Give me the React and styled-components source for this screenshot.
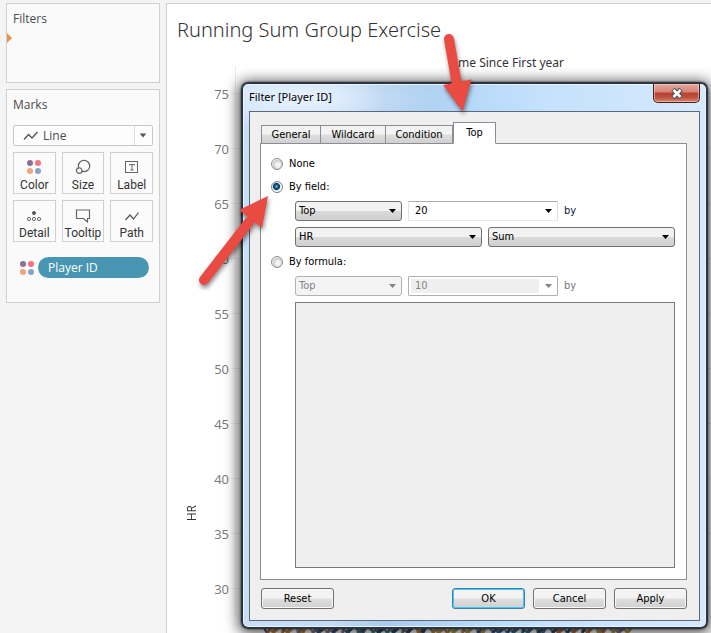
import React from "react";
import styled, { createGlobalStyle, css } from "styled-components";

const Global = createGlobalStyle`
  * { box-sizing: border-box; }
  html, body, #root { height: 100%; }
  body { margin: 0; background: #f4f4f4; overflow: hidden; }
  button, input, select { font: inherit; color: inherit; margin: 0; }
`;

const Page = styled.div`
  position: relative;
  display: flex;
  align-items: stretch;
  gap: 6px;
  min-height: 100%;
  padding: 3px 0 0 6px;
  font-family: "Open Sans", "Noto Sans", sans-serif;
  font-size: 12px;
  line-height: 16px;
  color: #4a4a4a;
`;

const Sidebar = styled.aside`
  display: flex;
  flex-direction: column;
  gap: 6px;
  flex: 0 0 154px;
`;

const Card = styled.section`
  display: flex;
  flex-direction: column;
  padding: 7px 6px;
  min-height: 80px;
  border: 1px solid #d0d0d0;
  background: #fafafa;
`;

const CardTitle = styled.h2`
  margin: 0;
  font-size: 12px;
  line-height: 16px;
  font-weight: 400;
`;

const DropMarker = styled.svg`
  display: block;
  width: 5px;
  height: 10px;
  margin: 6px 0 0 -6px;
`;

const MarkType = styled.button`
  display: flex;
  align-items: center;
  gap: 4px;
  height: 21px;
  margin-top: 12px;
  padding: 0 0 0 9px;
  border: 1px solid #c8c8c8;
  border-radius: 2px;
  background: #fdfdfd;
  text-align: left;
  span { flex: 1; }
`;

const MarkArrow = styled.svg`
  width: 18px;
  height: 19px;
  border-left: 1px solid #ddd;
`;

const MarkGrid = styled.div`
  display: grid;
  grid-template-columns: repeat(3, 1fr);
  gap: 6px;
  margin-top: 6px;
`;

const MarkButton = styled.button`
  display: flex;
  flex-direction: column;
  align-items: center;
  justify-content: flex-end;
  gap: 2px;
  height: 42px;
  padding: 0;
  border: 1px solid #d0d0d0;
  background: #fbfbfb;
  font-family: Roboto, "Open Sans", sans-serif;
  color: #333;
  white-space: nowrap;
`;

const PillRow = styled.div`
  display: flex;
  align-items: center;
  gap: 3px;
  margin: 15px 4px 0 6px;
`;

const Pill = styled.button`
  flex: 1;
  height: 21px;
  padding: 0 10px;
  border: 0;
  border-radius: 11px;
  background: #4996b2;
  font-weight: 500;
  && { color: #fff; }
  text-align: left;
`;

const MarksCard = styled(Card)`
  min-height: 214px;
`;

const Sheet = styled.main`
  flex: 1;
  min-width: 0;
  display: flex;
  flex-direction: column;
  border: solid #d0d0d0;
  border-width: 1px 0 0 1px;
  background: #fff;
`;

const SheetTitle = styled.h1`
  margin: 11px 0 0 10px;
  font-family: "Noto Sans", "Open Sans", sans-serif;
  font-weight: 300;
  font-size: 20px;
  line-height: 30px;
  color: #333;
`;

const ColumnHeader = styled.div`
  margin-top: 10px;
  padding-right: 147px;
  text-align: right;
  font-family: "Noto Sans", "Open Sans", sans-serif;
  font-size: 12px;
  line-height: 16px;
  color: #333;
`;

const Plot = styled.div`
  flex: 1;
  min-height: 0;
  display: flex;
  margin-top: -5px;
`;

const AxisCell = styled.div`
  flex: 0 0 34px;
  display: flex;
  flex-direction: column;
  justify-content: flex-end;
  align-items: center;
  padding: 0 0 104px 16px;
  line-height: 18px;
  color: #333;
  span { writing-mode: vertical-rl; transform: rotate(180deg); }
`;

const Ticks = styled.ol`
  flex: 1;
  margin: 0;
  padding: 0;
  list-style: none;
`;

const Tick = styled.li`
  display: flex;
  align-items: center;
  height: 55px;
  gap: 2px;
  font-size: 13px;
  color: #777;
  span { width: 28px; text-align: right; }
  &::after {
    content: "";
    flex: 1;
    height: 55px;
    background:
      linear-gradient(#ececec, #ececec) 0 50% / 100% 1px no-repeat,
      linear-gradient(#ececec, #ececec) 4px 0 / 1px 100% no-repeat;
  }
`;

const MarksStrip = styled.svg`
  display: block;
  height: 8px;
  width: 380px;
  margin-left: 95px;
`;

const Dialog = styled.div`
  position: absolute;
  top: 82px;
  left: 241px;
  right: 3px;
  bottom: 4px;
  display: flex;
  flex-direction: column;
  padding: 0 6px 6px;
  border: 2px solid #2b343f;
  border-radius: 7px;
  background:
    radial-gradient(ellipse 130px 34px at 60px 14px, #e9f3fe, transparent),
    linear-gradient(90deg, #c9dff6 0, #c3dbf5 90px, #a9cbec 140px, #badcfb 250px, #c5e1fc 65%, #d6e9fd 100%);
  box-shadow: 0 0 2px #222, 0 2px 14px 3px rgba(0, 0, 0, 0.65), inset 0 0 0 1px #e5f3ff;
  font-family: "DejaVu Sans Condensed", "DejaVu Sans", sans-serif;
  font-stretch: condensed;
  font-size: 11px;
  line-height: 14px;
  color: #000;
`;

const TitleBar = styled.header`
  display: flex;
  justify-content: space-between;
  height: 27px;
  h2 {
    margin: 5px 0 0;
    font-family: "Noto Sans", "Open Sans", sans-serif;
    font-stretch: normal;
    font-size: 11px;
    line-height: 16px;
    font-weight: 400;
  }
`;

const CloseButton = styled.button`
  display: flex;
  align-items: center;
  justify-content: center;
  width: 47px;
  height: 19px;
  padding: 0;
  border: 1px solid #43211e;
  border-top: 0;
  border-radius: 0 0 5px 5px;
  background: linear-gradient(#e6a79d 0, #d58376 45%, #b8402d 50%, #bf5240 75%, #d98774 100%);
  box-shadow: inset 0 0 0 1px rgba(255, 220, 210, 0.5);
`;

const Client = styled.div`
  flex: 1;
  min-height: 0;
  display: flex;
  flex-direction: column;
  padding: 11px 12px 11px 10px;
  border: 1px solid #5a6a7c;
  background: #efefef;
`;

const TabList = styled.div`
  display: flex;
  align-items: flex-end;
  height: 21px;
  padding-left: 1px;
  margin-bottom: -1px;
`;

const Tab = styled.button`
  flex: 0 0 ${(p) => p.$width}px;
  height: ${(p) => (p.$active ? 22 : 19)}px;
  padding: 0;
  border: 1px solid #8b8c95;
  border-left-width: ${(p) => (p.$joined ? 0 : 1)}px;
  border-bottom-color: ${(p) => (p.$active ? "#fff" : "#8b8c95")};
  background: ${(p) => (p.$active ? "#fff" : "linear-gradient(#f3f3f3 0 48%, #dedede 52%, #d0d0d0)")};
  position: relative;
`;

const Panel = styled.section`
  flex: 1;
  min-height: 0;
  display: flex;
  flex-direction: column;
  padding: 13px 11px 11px 10px;
  border: 1px solid #8b8c95;
  background: #fff;
`;

const RadioLabel = styled.label`
  display: flex;
  align-items: center;
  gap: 6px;
  height: 14px;
  margin-top: ${(p) => p.$top || 0}px;
`;

const Radio = styled.input`
  appearance: none;
  width: 12px;
  height: 12px;
  border: 1px solid #8e8f8f;
  border-radius: 50%;
  background: radial-gradient(circle at 60% 60%, #f4f4f4 20%, #c4c8cc 62%, #f4f4f4 66%);
  &:checked {
    border-color: #6b8496;
    background: radial-gradient(circle at 45% 45%, #69c6e8 0, #17587f 24%, #0d3352 40%, #dfe8ee 50%, #fff 66%);
  }
`;

const FieldRow = styled.div`
  display: flex;
  align-items: center;
  gap: 6px;
  margin: ${(p) => p.$top}px 0 0 24px;
`;

const SelectBox = styled.span`
  display: grid;
  align-items: center;
  flex: ${(p) => (p.$width ? `0 0 ${p.$width}px` : "1")};
  height: 20px;
  border: 1px solid ${(p) => (p.$disabled ? "#adb2b5" : "#707070")};
  border-radius: 3px;
  background: ${(p) => (p.$disabled ? "#f4f4f4" : "linear-gradient(#f2f2f2 0 48%, #dadada 52%, #cfcfcf)")};
  color: ${(p) => (p.$disabled ? "#838383" : "#000")};
  > * { grid-area: 1 / 1; }
`;

const Select = styled.select`
  appearance: none;
  width: 100%;
  height: 18px;
  padding: 0 16px 0 3px;
  border: 0;
  background: transparent;
  &:disabled { color: inherit; opacity: 1; }
`;

const Caret = styled.svg`
  justify-self: end;
  margin-right: 5px;
  width: 7px;
  height: 4px;
  pointer-events: none;
  fill: currentColor;
`;

const ComboBox = styled(SelectBox)`
  border-color: ${(p) => (p.$disabled ? "#adb2b5" : "#abadb3 #dbdfe6 #e3e9ef #e2e3ea")};
  border-radius: 1px;
  background: #fff;
`;

const ComboInput = styled.input`
  width: 100%;
  height: 14px;
  padding: 0 4px;
  border: solid transparent;
  border-width: 0 18px 0 2px;
  background: #fff;
  background-clip: padding-box;
  ${(p) => p.disabled && css`background-color: #efefef; color: inherit;`}
`;

const By = styled.span`
  color: ${(p) => (p.$disabled ? "#777" : "#0b1a3a")};
`;

const FormulaBox = styled.textarea`
  flex: 1;
  min-height: 0;
  margin: 6px 0 0 24px;
  border: 1px solid #7a7a7a;
  background: #efefef;
  resize: none;
`;

const Buttons = styled.footer`
  display: flex;
  gap: 8px;
  margin-top: 8px;
  padding-left: 1px;
`;

const Button = styled.button`
  width: 73px;
  height: 21px;
  padding: 0;
  border: 1px solid ${(p) => (p.$primary ? "#3c7fb1" : "#707070")};
  border-radius: 3px;
  background: linear-gradient(#f3f3f3 0 48%, #dedede 52%, #d0d0d0);
  box-shadow: inset 0 0 0 1px ${(p) => (p.$primary ? "#48c8f0" : "#f7f7f7")};
  margin-right: ${(p) => (p.$first ? "auto" : "0")};
`;

const Arrows = styled.svg`
  position: absolute;
  top: 0;
  left: 0;
  pointer-events: none;
  filter: drop-shadow(1px 3px 2px rgba(0, 0, 0, 0.45));
`;

const LineIcon = () => (
  <svg width="16" height="12" viewBox="0 0 16 12" fill="none" stroke="#555" strokeWidth="1.3">
    <path d="M1 9.5 L5.500 4.500 L9 8 L14.500 2" />
  </svg>
);

const ColorDots = () => (
  <svg width="16" height="16" viewBox="0 0 16 16">
    <circle cx="4" cy="4" r="3" fill="#8b6f99" />
    <circle cx="12" cy="4" r="3" fill="#f67280" />
    <circle cx="4" cy="12" r="3" fill="#f1a478" />
    <circle cx="12" cy="12" r="3" fill="#83a3cd" />
  </svg>
);

const icons = {
  Color: <ColorDots />,
  Size: (
    <svg width="16" height="16" viewBox="0 0 16 16" fill="#fbfbfb" stroke="#666" strokeWidth="1.2">
      <circle cx="9" cy="7" r="5.7" />
      <circle cx="4.2" cy="11.6" r="2.8" />
    </svg>
  ),
  Label: (
    <svg width="14" height="16" viewBox="0 0 14 16" fill="none" stroke="#666">
      <rect x="0.5" y="2.5" width="12" height="11" />
      <path d="M4.500 6.500V5.500H9.500V6.500M7 5.500V11M5.500 11H8.500" />
    </svg>
  ),
  Detail: (
    <svg width="16" height="16" viewBox="0 0 16 16" fill="none" stroke="#666">
      <circle cx="8" cy="6" r="1.6" fill="#555" />
      <circle cx="3" cy="12" r="1.6" />
      <circle cx="8" cy="12" r="1.6" />
      <circle cx="13" cy="12" r="1.6" />
    </svg>
  ),
  Tooltip: (
    <svg width="16" height="16" viewBox="0 0 16 16" fill="none" stroke="#666" strokeWidth="1.2">
      <path d="M1.500 3H14.500V11.500H12.500V15L8.500 11.500H1.500Z" />
    </svg>
  ),
  Path: (
    <svg width="16" height="16" viewBox="0 0 16 16" fill="none" stroke="#555" strokeWidth="1.2">
      <path d="M1.500 13L6 8L9.500 12L14.500 5.500" />
    </svg>
  ),
};

const DownCaret = () => (
  <Caret viewBox="0 0 7 4"><path d="M0 0H7L3.500 4Z" /></Caret>
);

function Drop({ value, width, disabled, label }) {
  return (
    <SelectBox $width={width} $disabled={disabled}>
      <Select aria-label={label} disabled={disabled} defaultValue={value}>
        <option>{value}</option>
      </Select>
      <DownCaret />
    </SelectBox>
  );
}

function Combo({ value, disabled, label }) {
  return (
    <ComboBox $width={150} $disabled={disabled}>
      <ComboInput aria-label={label} disabled={disabled} defaultValue={value} />
      <DownCaret />
    </ComboBox>
  );
}

const tabs = [["General", 60], ["Wildcard", 65], ["Condition", 67], ["Top", 43]];
const strokes = ["#2f4a6d", "#345a7c", "#b98345", "#4d7d78", "#8b6f8f", "#b06a4a", "#3f6690", "#a89a55"];

export default function App() {
  return (
    <Page>
      <Global />
      <Sidebar>
        <Card>
          <CardTitle>Filters</CardTitle>
          <DropMarker viewBox="0 0 5 10"><path d="M0 0L5 5L0 10Z" fill="#f28e4b" /></DropMarker>
        </Card>
        <MarksCard>
          <CardTitle>Marks</CardTitle>
          <MarkType>
            <LineIcon />
            <span>Line</span>
            <MarkArrow viewBox="0 0 18 19"><path d="M5 7.500H12L8.500 11.500Z" fill="#555" /></MarkArrow>
          </MarkType>
          <MarkGrid>
            {Object.keys(icons).map((name) => (
              <MarkButton key={name}>{icons[name]}{name}</MarkButton>
            ))}
          </MarkGrid>
          <PillRow>
            <ColorDots />
            <Pill>Player ID</Pill>
          </PillRow>
        </MarksCard>
      </Sidebar>

      <Sheet>
        <SheetTitle>Running Sum Group Exercise</SheetTitle>
        <ColumnHeader>me Since First year</ColumnHeader>
        <Plot>
          <AxisCell><span>HR</span></AxisCell>
          <Ticks>
            {[75, 70, 65, 60, 55, 50, 45, 40, 35, 30].map((n) => (
              <Tick key={n}><span>{n}</span></Tick>
            ))}
          </Ticks>
        </Plot>
        <MarksStrip viewBox="0 0 380 8" aria-hidden="true">
          {Array.from({ length: 74 }, (_, i) => (
            <path
              key={i}
              d={`M${i * 5} ${i % 3 ? 8 : 0}L${i * 5 + 5 + (i % 4) * 2} ${i % 3 ? 0 : 8}`}
              stroke={strokes[(i * 5 + (i >> 2)) % strokes.length]}
              strokeWidth={2 + (i % 3)}
            />
          ))}
        </MarksStrip>
      </Sheet>

      <Dialog role="dialog" aria-labelledby="dialog-title">
        <TitleBar>
          <h2 id="dialog-title">Filter [Player ID]</h2>
          <CloseButton aria-label="Close">
            <svg width="14" height="11" viewBox="0 0 14 11">
              <path d="M3 1.500L11 9.500M11 1.500L3 9.500" stroke="#4c5465" strokeWidth="5" />
              <path d="M3.500 2L10.500 9M10.500 2L3.500 9" stroke="#fff" strokeWidth="2.6" />
            </svg>
          </CloseButton>
        </TitleBar>
        <Client>
          <TabList role="tablist">
            {tabs.map(([name, width], i) => (
              <Tab key={name} role="tab" aria-selected={i === 3} $active={i === 3} $joined={i === 1 || i === 2} $width={width}>
                {name}
              </Tab>
            ))}
          </TabList>
          <Panel role="tabpanel">
            <RadioLabel><Radio type="radio" name="mode" />None</RadioLabel>
            <RadioLabel $top={9}><Radio type="radio" name="mode" defaultChecked />By field:</RadioLabel>
            <FieldRow $top={7}>
              <Drop label="Direction" value="Top" width={107} />
              <Combo label="Count" value="20" />
              <By>by</By>
            </FieldRow>
            <FieldRow $top={6}>
              <Drop label="Field" value="HR" />
              <Drop label="Aggregation" value="Sum" />
            </FieldRow>
            <RadioLabel $top={8}><Radio type="radio" name="mode" />By formula:</RadioLabel>
            <FieldRow $top={7}>
              <Drop label="Formula direction" value="Top" width={107} disabled />
              <Combo label="Formula count" value="10" disabled />
              <By $disabled>by</By>
            </FieldRow>
            <FormulaBox aria-label="Formula" disabled />
          </Panel>
          <Buttons>
            <Button $first>Reset</Button>
            <Button $primary>OK</Button>
            <Button>Cancel</Button>
            <Button>Apply</Button>
          </Buttons>
        </Client>
      </Dialog>

      <Arrows width="711" height="633" viewBox="0 0 711 633" fill="#e94b43" stroke="#e94b43" strokeLinecap="round" aria-hidden="true">
        <path d="M449 39L457 85" strokeWidth="10" />
        <path d="M443 85L471.500 79.500L462.500 111.500Z" stroke="none" />
        <path d="M204 280L249 222" strokeWidth="10" />
        <path d="M239 210L268 196L262 228Z" stroke="none" />
      </Arrows>
    </Page>
  );
}
